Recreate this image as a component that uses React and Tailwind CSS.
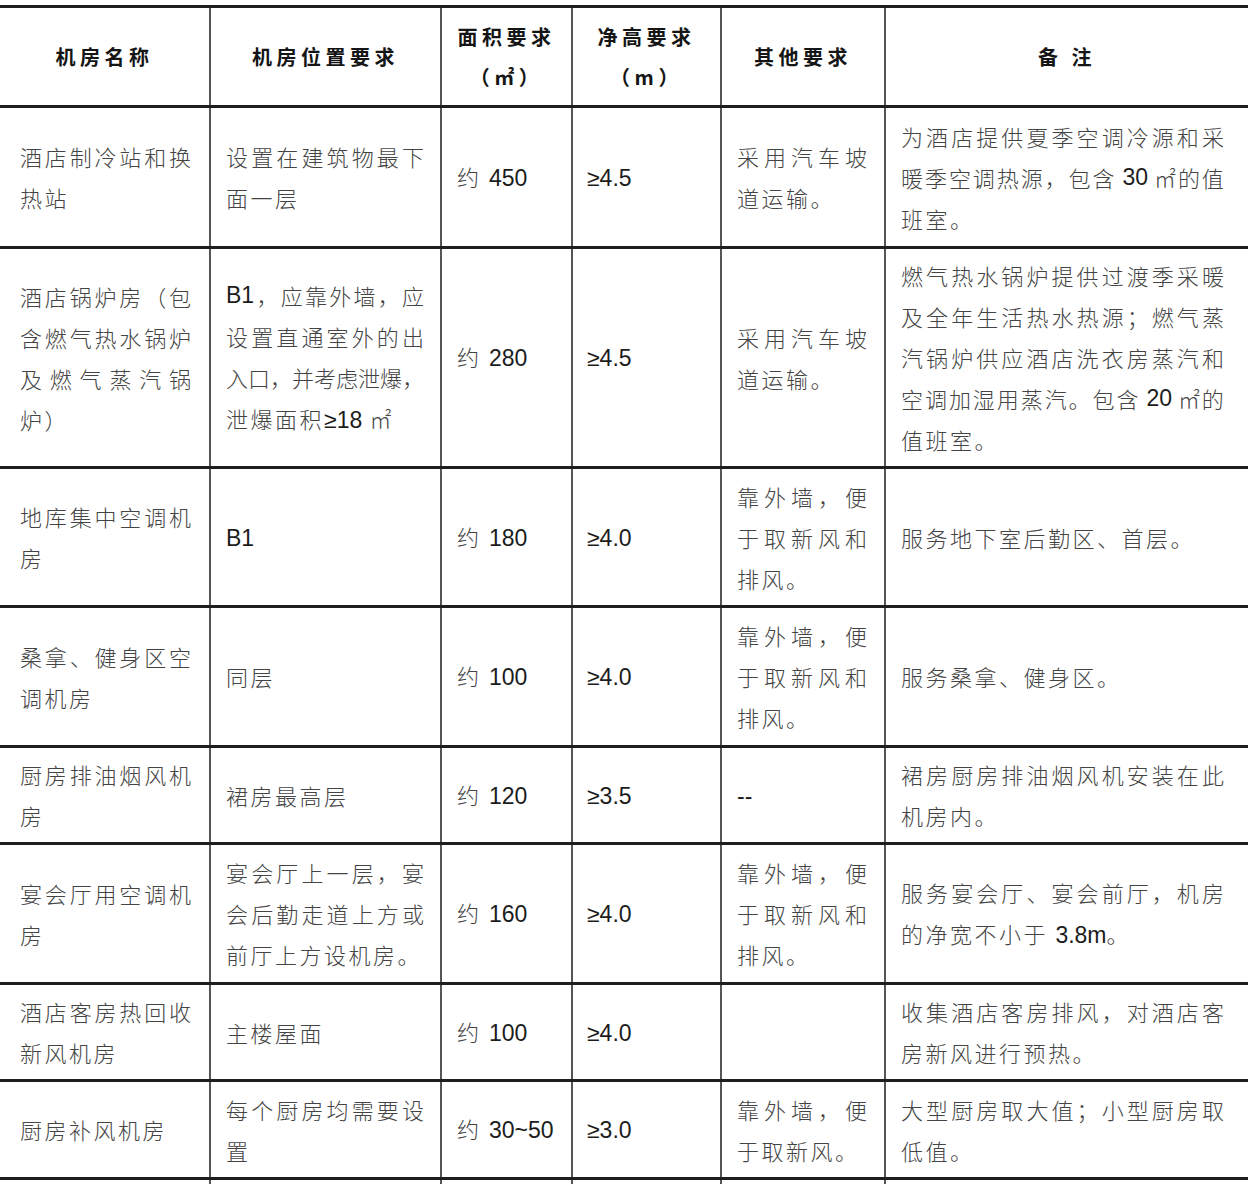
const LATIN = /^[A-Za-z0-9.~≥\-]$/;

const cols = [
    { pad: "pl-[20px] pr-[18px]", border: true },
    { pad: "pl-[15px] pr-[16px]", border: true },
    { pad: "pl-[15px] pr-[6px]", border: true },
    { pad: "pl-[14px] pr-[6px]", border: true },
    { pad: "pl-[15px] pr-[17px]", border: true },
    { pad: "pl-[15px] pr-[24px]", border: false },
];

const header = [
    ["机房名称"],
    ["机房位置要求"],
    ["面积要求", "（㎡）"],
    ["净高要求", "（m）"],
    ["其他要求"],
    ["备 注"],
];

const rows = [
    {
        h: "h-[141px]",
        cells: [
            ["酒店制冷站和换", "热站"],
            ["设置在建筑物最下", "面一层"],
            ["约 450"],
            ["≥4.5"],
            ["采用汽车坡", "道运输。"],
            ["为酒店提供夏季空调冷源和采", "暖季空调热源，包含 30 ㎡的值", "班室。"],
        ],
    },
    {
        h: "h-[220px]",
        cells: [
            ["酒店锅炉房（包", "含燃气热水锅炉", "及燃气蒸汽锅", "炉）"],
            ["B1，应靠外墙，应", "设置直通室外的出", "入口，并考虑泄爆，", "泄爆面积≥18 ㎡"],
            ["约 280"],
            ["≥4.5"],
            ["采用汽车坡", "道运输。"],
            [
                "燃气热水锅炉提供过渡季采暖",
                "及全年生活热水热源；燃气蒸",
                "汽锅炉供应酒店洗衣房蒸汽和",
                "空调加湿用蒸汽。包含 20 ㎡的",
                "值班室。",
            ],
        ],
    },
    {
        h: "h-[139px]",
        cells: [
            ["地库集中空调机", "房"],
            ["B1"],
            ["约 180"],
            ["≥4.0"],
            ["靠外墙，便", "于取新风和", "排风。"],
            ["服务地下室后勤区、首层。"],
        ],
    },
    {
        h: "h-[140px]",
        cells: [
            ["桑拿、健身区空", "调机房"],
            ["同层"],
            ["约 100"],
            ["≥4.0"],
            ["靠外墙，便", "于取新风和", "排风。"],
            ["服务桑拿、健身区。"],
        ],
    },
    {
        h: "h-[97px]",
        cells: [
            ["厨房排油烟风机", "房"],
            ["裙房最高层"],
            ["约 120"],
            ["≥3.5"],
            ["--"],
            ["裙房厨房排油烟风机安装在此", "机房内。"],
        ],
    },
    {
        h: "h-[140px]",
        cells: [
            ["宴会厅用空调机", "房"],
            ["宴会厅上一层，宴", "会后勤走道上方或", "前厅上方设机房。"],
            ["约 160"],
            ["≥4.0"],
            ["靠外墙，便", "于取新风和", "排风。"],
            ["服务宴会厅、宴会前厅，机房", "的净宽不小于 3.8m。"],
        ],
    },
    {
        h: "h-[97px]",
        cells: [
            ["酒店客房热回收", "新风机房"],
            ["主楼屋面"],
            ["约 100"],
            ["≥4.0"],
            [],
            ["收集酒店客房排风，对酒店客", "房新风进行预热。"],
        ],
    },
    {
        h: "h-[98px]",
        cells: [
            ["厨房补风机房"],
            ["每个厨房均需要设", "置"],
            ["约 30~50"],
            ["≥3.0"],
            ["靠外墙，便", "于取新风。"],
            ["大型厨房取大值；小型厨房取", "低值。"],
        ],
    },
];

// split a line into glyph items, latin runs kept together
function tokenize(line) {
    const out = [];
    let buf = "";
    let pre = false;
    const chars = [...line];
    chars.forEach((ch, i) => {
        if (LATIN.test(ch)) {
            if (!buf) pre = chars[i - 1] === " ";
            buf += ch;
            return;
        }
        if (buf) {
            out.push({ t: buf, latin: true, pre, post: ch === " " });
            buf = "";
        }
        if (ch === " ") return;
        out.push({ t: ch, latin: false });
    });
    if (buf) out.push({ t: buf, latin: true, pre, post: false });
    return out;
}

function Latin({ children, className = "" }) {
    return (
        <span
            className={`font-['Liberation_Sans',sans-serif] font-normal text-[23px] tracking-normal text-[#1c1c1c] ${className}`}
        >
            {children}
        </span>
    );
}

function JustLine({ line }) {
    return (
        <div className="flex justify-between whitespace-nowrap">
            {tokenize(line).map((tok, i) =>
                tok.latin ? (
                    <Latin key={i} className={`${tok.pre ? "ml-[6px]" : ""} ${tok.post ? "mr-[4px]" : ""}`}>
                        {tok.t}
                    </Latin>
                ) : (
                    <span key={i}>{tok.t}</span>
                )
            )}
        </div>
    );
}

function PlainLine({ line }) {
    const parts = line.split(/([A-Za-z0-9.~≥\-]+)/);
    return (
        <div className="whitespace-nowrap tracking-[2.5px]">
            {parts.map((p, i) => (i % 2 === 1 ? <Latin key={i}>{p}</Latin> : <span key={i}>{p}</span>))}
        </div>
    );
}

function BodyCell({ lines, col }) {
    return (
        <div
            className={`flex flex-col justify-center leading-[41px] ${col.pad} ${
                col.border ? "border-r-2 border-[#555]" : ""
            }`}
        >
            {lines.map((line, i) =>
                lines.length > 1 && i < lines.length - 1 ? (
                    <JustLine key={i} line={line} />
                ) : (
                    <PlainLine key={i} line={line} />
                )
            )}
        </div>
    );
}

export default function App() {
    return (
        <div className="w-[1248px] h-[1184px] overflow-hidden bg-white pt-[5px] font-['Noto_Sans_CJK_SC',sans-serif] font-light text-[22px] text-[#444]">
            <div className="border-t-[3px] border-[#1e1e1e]">
                {/* header */}
                <div className="grid grid-cols-[211px_231px_131px_149px_164px_362px] h-[100px] border-b-[3px] border-[#1e1e1e]">
                    {header.map((lines, i) => (
                        <div
                            key={i}
                            className={`flex flex-col items-center justify-center leading-[40px] font-bold text-[20px] tracking-[4.5px] text-[#151515] ${
                                cols[i].border ? "border-r-2 border-[#555]" : ""
                            }`}
                        >
                            {lines.map((l, j) => (
                                <div key={j} className="whitespace-pre">
                                    {l}
                                </div>
                            ))}
                        </div>
                    ))}
                </div>

                {rows.map((row, r) => (
                    <div
                        key={r}
                        className={`grid grid-cols-[211px_231px_131px_149px_164px_362px] ${row.h} border-b-[3px] border-[#1e1e1e]`}
                    >
                        {row.cells.map((lines, c) => (
                            <BodyCell key={c} lines={lines} col={cols[c]} />
                        ))}
                    </div>
                ))}

                {/* next row, cut off */}
                <div className="grid grid-cols-[211px_231px_131px_149px_164px_362px] h-[40px]">
                    {cols.map((col, i) => (
                        <div key={i} className={col.border ? "border-r-2 border-[#555]" : ""} />
                    ))}
                </div>
            </div>
        </div>
    );
}
